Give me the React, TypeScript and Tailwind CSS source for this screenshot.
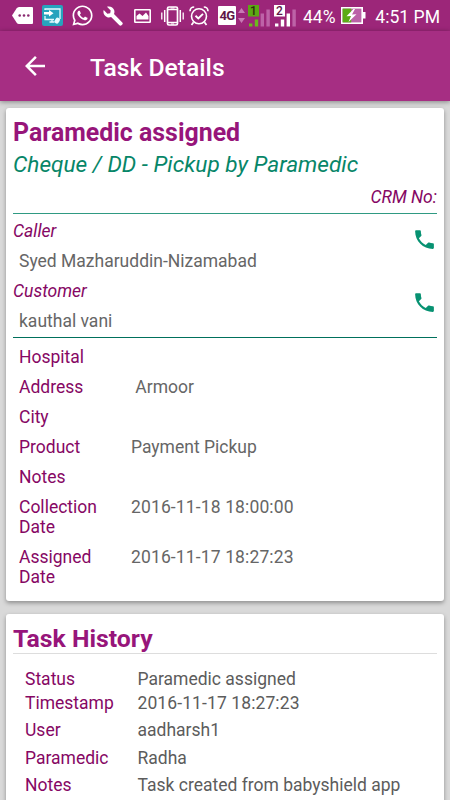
import type { ReactNode } from "react"
import { FaWhatsapp } from "react-icons/fa"
import { MdArrowBack, MdPhone } from "react-icons/md"

const details = [
  { label: "Hospital", value: "" },
  { label: "Address", value: "\u00a0Armoor" },
  { label: "City", value: "" },
  { label: "Product", value: "Payment Pickup" },
  { label: "Notes", value: "" },
  { label: "Collection Date", value: "2016-11-18 18:00:00", spacing: "tracking-[0.13px]" },
  { label: "Assigned Date", value: "2016-11-17 18:27:23", spacing: "tracking-[0.13px]" },
]

const history = [
  { label: "Status", value: "Paramedic assigned", height: "h-6" },
  { label: "Timestamp", value: "2016-11-17 18:27:23", height: "h-[27px]", spacing: "tracking-[0.1px]" },
  { label: "User", value: "aadharsh1", height: "h-7" },
  { label: "Paramedic", value: "Radha", height: "h-[27px]" },
  { label: "Notes", value: "Task created from babyshield app", height: "h-7" },
]

function MessageIcon() {
  return (
    <svg width="21" height="17" viewBox="0 0 21 17" className="ml-3 shrink-0">
      <path d="M7 0h13q1 0 1 1v15q0 1-1 1H7q-1.500 0-2.500-1.500L0 8.500 4.500 1.500Q5.500 0 7 0z" fill="#fff" />
      <g fill="#8a2a70">
        <circle cx="7.700" cy="8.500" r="1.300" />
        <circle cx="12" cy="8.500" r="1.300" />
        <circle cx="16.300" cy="8.500" r="1.300" />
      </g>
    </svg>
  )
}

function CastIcon() {
  return (
    <svg width="21" height="21" viewBox="0 0 21 21" className="ml-[9px] shrink-0">
      <rect width="21" height="21" rx="2" fill="#27a3bd" />
      <path d="M3 5V4h15v10M3 11v3.500h9M7.500 17h5M10 14.500V17" fill="none" stroke="#e6fbff" strokeWidth="1.300" />
      <path d="M2 7h5V5l4.500 3.300L7 11.500V9.500H2z" fill="#fff" />
      <rect x="13" y="12.500" width="4.500" height="6" rx="2" transform="rotate(35 15 15.500)" fill="#e6fbff" />
    </svg>
  )
}

function WrenchIcon() {
  return (
    <svg width="20" height="20" viewBox="0 0 20 20" className="ml-[9px] shrink-0" fill="#fff">
      <path d="M4 .700 7.700 4.400 7.200 7.200 4.400 7.700.700 4C-.300 7 1.300 10.300 4.300 11.200c1.300.400 2.700.200 3.800-.200l8.300 8.300c.600.600 1.500.600 2.100 0l.800-.800c.600-.600.600-1.500 0-2.100L11 8.100c.500-1.200.600-2.500.200-3.800C10.300 1.300 7-.300 4 .700z" />
    </svg>
  )
}

function PictureIcon() {
  return (
    <svg width="17" height="14" viewBox="0 0 17 14" className="ml-[11px] shrink-0">
      <rect x=".8" y=".8" width="15.400" height="12.400" rx=".5" fill="none" stroke="#fff" strokeWidth="1.600" />
      <path d="M2.500 7 5.500 4.500l3 2.500L12 3.500 14.500 7v3.500h-12z" fill="#fff" />
    </svg>
  )
}

function VibrateIcon() {
  return (
    <svg width="23" height="20" viewBox="0 0 23 20" className="ml-2.5 shrink-0" fill="none" stroke="#fff">
      <rect x="6.500" y="1" width="10" height="18" rx="1.500" strokeWidth="1.700" />
      <path d="M6.500 3.500h10M6.500 16.500h10" strokeWidth="1.500" />
      <path d="M9.500 2h4M10 18h3" strokeWidth="1" />
      <path d="M3.700 4v12M19.300 4v12" strokeWidth="1.500" />
      <path d="M.800 6.500v7M22.200 6.500v7" strokeWidth="1.300" />
    </svg>
  )
}

function AlarmIcon() {
  return (
    <svg width="20" height="20" viewBox="0 0 20 20" className="ml-[5px] shrink-0" fill="none" stroke="#fff" strokeWidth="1.600">
      <circle cx="10" cy="10.300" r="7.500" />
      <path d="M6.500 9.800 9.300 12.500 14 7.800" strokeWidth="1.900" />
      <path d="M1 5.200C1 2.800 2.800 1 5.200 1M19 5.200C19 2.800 17.200 1 14.800 1M4.500 16.200 2.500 19M15.500 16.200l2 2.800" strokeWidth="1.700" />
    </svg>
  )
}

function DataArrows() {
  return (
    <svg width="7" height="15" viewBox="0 0 7 15" className="ml-0.5 shrink-0" fill="#c77ab5">
      <path d="M3.500 0 7 5H0zM0 10h7l-3.500 5z" />
    </svg>
  )
}

function Signal({ sim, active, bars, badge, digit, className }: { sim: string; active: number; bars: string; badge: string; digit: string; className: string }) {
  return (
    <svg width="22" height="22" viewBox="0 0 22 22" className={className}>
      {[3, 7, 13, 17].map((height, i) => (
        <rect key={height} x={1 + i * 5.8} y={21.5 - height} width="3.400" height={height} fill={i < active ? bars : "#bd63a7"} />
      ))}
      <rect width="11" height="11.500" fill={badge} />
      <text x="5.500" y="9.900" textAnchor="middle" fontSize="12" fontWeight="500" fill={digit}>{sim}</text>
    </svg>
  )
}

function BatteryIcon() {
  return (
    <svg width="25" height="17" viewBox="0 0 25 17" className="ml-[5px] shrink-0">
      <rect x=".8" y=".8" width="20.400" height="15.400" fill="#bb62a7" stroke="#fff" strokeWidth="1.600" />
      <rect x="1.600" y="1.600" width="8.600" height="13.800" fill="#5cac16" />
      <rect x="22" y="5" width="2.500" height="6.500" fill="#fff" />
      <path d="M12.500 2 5.500 9.300 10 9l-2.500 6L15.500 7.300 11 7.500 14 2z" fill="#fff" />
    </svg>
  )
}

function StatusBar() {
  return (
    <div className="flex h-[31px] shrink-0 items-center bg-[#9c2679] text-white">
      <MessageIcon />
      <CastIcon />
      <FaWhatsapp size={23} className="ml-2 shrink-0" />
      <WrenchIcon />
      <PictureIcon />
      <VibrateIcon />
      <AlarmIcon />
      <span className="ml-[9px] flex h-[19px] w-[18px] shrink-0 items-center justify-center rounded-[1px] bg-white text-[13px] font-bold tracking-tighter text-[#5f1748]">4G</span>
      <DataArrows />
      <Signal sim="1" active={2} bars="#6cb81c" badge="#5ca714" digit="#2f2a10" className="ml-[3px] shrink-0" />
      <Signal sim="2" active={3} bars="#fff" badge="#fff" digit="#5f1748" className="ml-1 shrink-0" />
      <span className="ml-[7px] pt-0.5 leading-5">44%</span>
      <BatteryIcon />
      <span className="ml-auto whitespace-nowrap pr-[10px] pt-0.5 text-[17.600px] leading-5">4:51 PM</span>
    </div>
  )
}

function Card({ children, className }: { children: ReactNode; className: string }) {
  return (
    <section className={`mx-1.5 shrink-0 rounded-[3px] bg-white px-[7px] shadow-[0_2px_4px_rgba(0,0,0,0.35)] ${className}`}>
      {children}
    </section>
  )
}

function Contact({ role, name, className }: { role: string; name: string; className: string }) {
  return (
    <div className="flex h-[60px] justify-between">
      <div className="leading-[30px]">
        <h3 className="italic text-[#860764]">{role}</h3>
        <p className="pl-1.5 text-[#666]">{name}</p>
      </div>
      <MdPhone size={25} className={`shrink-0 text-[#079272] ${className}`} />
    </div>
  )
}

export default function App() {
  return (
    <main className="flex h-[800px] w-[450px] flex-col overflow-hidden bg-[#d9d9d9] font-[Roboto,sans-serif] text-[17.500px]">
      <StatusBar />
      <header className="z-10 flex h-[70px] shrink-0 items-center bg-[#a62e83] pl-5 text-white shadow-[0_1px_5px_rgba(0,0,0,0.4)]">
        <MdArrowBack size={30} />
        <h1 className="pl-10 pt-[3px] text-[24.700px] font-medium">Task Details</h1>
      </header>

      <Card className="mt-[7px] h-[493px]">
        <h2 className="h-[42px] pt-2 text-[24.900px] font-bold leading-[34px] text-[#97157a]">Paramedic assigned</h2>
        <p className="h-[29px] text-[22.650px] italic leading-[30px] text-[#078668]">Cheque / DD - Pickup by Paramedic</p>
        <p className="h-[35px] border-b border-b-[#2f9a82] pt-0.5 text-right italic leading-[33px] text-[#860764]">CRM No:</p>
        <div className="h-[124px] border-b border-b-[#00705c] pt-0.5">
          <Contact role="Caller" name="Syed Mazharuddin-Nizamabad" className="mt-[11px]" />
          <Contact role="Customer" name="kauthal vani" className="mt-[14px]" />
        </div>
        <dl className="pl-1.5 pt-1">
          {details.map(({ label, value, spacing }) => (
            <div key={label} className="flex py-[5px] leading-5">
              <dt className="w-[90px] text-[#860764]">{label}</dt>
              <dd className={`pl-[22px] text-[#666] ${spacing ?? ""}`}>{value}</dd>
            </div>
          ))}
        </dl>
      </Card>

      <Card className="mt-[13px] h-[220px]">
        <h2 className="h-10 border-b border-b-[#ddd] pt-2 text-[24.800px] font-bold leading-[34px] text-[#97157a]">Task History</h2>
        <dl className="pl-3 pt-[15px]">
          {history.map(({ label, value, height, spacing }) => (
            <div key={label} className={`flex leading-5 ${height}`}>
              <dt className="w-[112.500px] text-[#860764]">{label}</dt>
              <dd className={`text-[#5c5c5c] ${spacing ?? ""}`}>{value}</dd>
            </div>
          ))}
        </dl>
      </Card>
    </main>
  )
}
